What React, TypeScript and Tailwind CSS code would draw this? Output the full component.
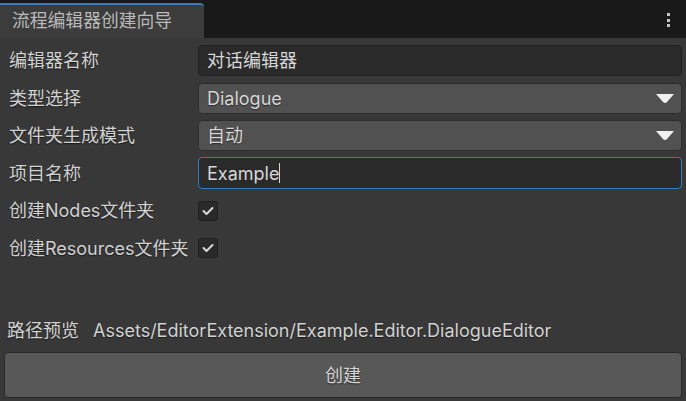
import React from "react"

const font = { fontFamily: "Inter, 'Noto Sans CJK SC', sans-serif" }

function Row({ label, children }: { label: string; children: React.ReactNode }) {
  return (
    <div className="flex items-center h-[31px]">
      <div className="w-[198px] pl-[9px] text-[18px] text-[#d2d2d2] whitespace-nowrap [text-shadow:0_1px_1px_#1a1a1a]">
        {label}
      </div>
      {children}
    </div>
  )
}

function Dropdown({ value }: { value: string }) {
  return (
    <div className="flex-1 h-[31px] mr-[4px] rounded-[4px] bg-[#515151] border border-[#2e2e2e] flex items-center justify-between pl-[8px] pr-[6px]">
      <span className="text-[18px] text-[#d6d6d6] [text-shadow:0_1px_1px_#2a2a2a]">{value}</span>
      <svg width="20" height="11" viewBox="0 0 20 11">
        <path d="M1 1 L19 1 L12 9 Q10 11 8 9 Z" fill="#f0f0f0" />
      </svg>
    </div>
  )
}

function Check() {
  return (
    <div className="w-[20px] h-[20px] rounded-[3px] bg-[#2a2a2a] border border-[#1f1f1f] flex items-center justify-center">
      <svg width="12" height="10" viewBox="0 0 12 10">
        <path d="M1.5 5 L4.5 8 L10.5 2" stroke="#d8d8d8" strokeWidth="2" fill="none" strokeLinecap="round" strokeLinejoin="round" />
      </svg>
    </div>
  )
}

export default function App() {
  return (
    <div className="w-[686px] h-[401px] bg-[#383838] flex flex-col overflow-hidden" style={font}>
      {/* Title bar */}
      <div className="h-[38px] bg-[#191919] flex items-end justify-between shrink-0">
        <div className="w-[204px] h-[35px] bg-[#3c3c3c] border-t-2 border-[#3a79bb] rounded-tr-[4px] flex items-center pl-[12px]">
          <span className="text-[17.8px] text-[#bababa]">流程编辑器创建向导</span>
        </div>
        <div className="self-start mt-[13px] mr-[16px] flex flex-col gap-[2.5px]">
          <div className="w-[3px] h-[3px] bg-[#c8c8c8]" />
          <div className="w-[3px] h-[3px] bg-[#c8c8c8]" />
          <div className="w-[3px] h-[3px] bg-[#c8c8c8]" />
        </div>
      </div>

      {/* Body */}
      <div className="flex-1 flex flex-col pt-[7px] pb-[3px]">
        <div className="flex flex-col gap-[6.5px]">
          <Row label="编辑器名称">
            <div className="flex-1 h-[31px] mr-[4px] rounded-[4px] bg-[#2a2a2a] border border-[#212121] flex items-center pl-[8px]">
              <span className="text-[18px] text-[#d6d6d6]">对话编辑器</span>
            </div>
          </Row>
          <Row label="类型选择">
            <Dropdown value="Dialogue" />
          </Row>
          <Row label="文件夹生成模式">
            <Dropdown value="自动" />
          </Row>
          <Row label="项目名称">
            <div className="flex-1 h-[32px] mr-[4px] rounded-[4px] bg-[#2a2a2a] border border-[#3a79bb] flex items-center pl-[8px]">
              <span className="text-[18px] text-[#d6d6d6]">Example</span>
              <span className="w-[1px] h-[20px] bg-[#d6d6d6]" />
            </div>
          </Row>
          <Row label="创建Nodes文件夹">
            <Check />
          </Row>
          <Row label="创建Resources文件夹">
            <Check />
          </Row>
        </div>

        <div className="mt-auto flex items-center h-[31px] pl-[7px] gap-[14px] text-[18px] text-[#d2d2d2] [text-shadow:0_1px_1px_#1a1a1a]">
          <span>路径预览</span>
          <span>Assets/EditorExtension/Example.Editor.DialogueEditor</span>
        </div>

        <div className="mt-[6px] mx-[4px] h-[46px] rounded-[4px] bg-[#585858] border border-[#2a2a2a] flex items-center justify-center">
          <span className="text-[18px] text-[#d6d6d6] [text-shadow:0_1px_1px_#2a2a2a]">创建</span>
        </div>
      </div>
    </div>
  )
}
